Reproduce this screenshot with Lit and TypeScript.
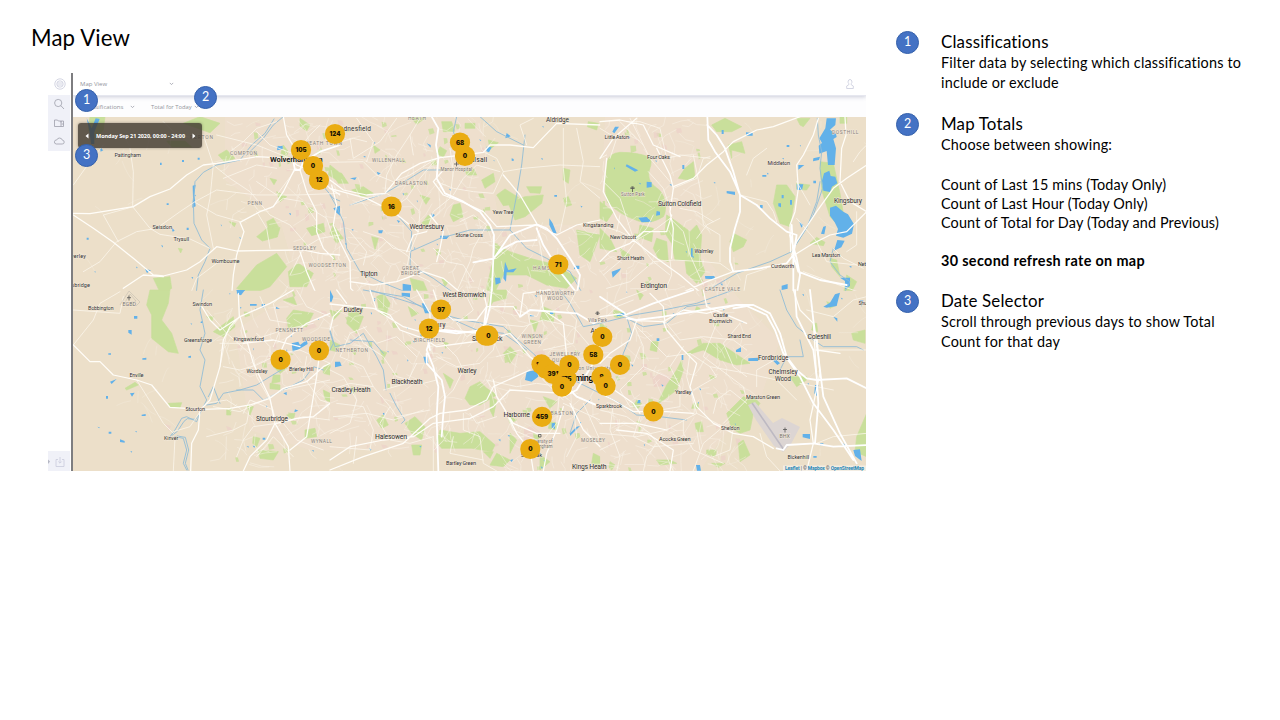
import { LitElement, html, svg, css } from "lit";
import { customElement } from "lit/decorators.js";

type Label = [string, number, number, number, string];
type Pin = [string, number, number];
interface Sheet { x: number; y: number; parks: string; water: string; streams: string; minor: string; major: string; trunk: string; }

// Every sheet is drawn on a grid of a third of a pixel.
const sheets: Sheet[] = [
  {
    x: 70, y: 115,
    parks: "M60 5h45l-5 40l-25 30l-20-30zM290 78l55 0l20 18l-60 0zM445 120l25-15l25 25l-30 12zM560 365l40-32l30 5l-8 28l-45 12zM500 520l60-70l60-35l30 40l-50 60l-60 25zM655 470l30-25l45 30l-20 40l-50 0zM250 490l50-5l5 35l-30 22zM710 340l50-15l5 25l-40 12zM340 25l50-20l60 20l-30 28zM590 320l20-10l15 25l-30 5zM780 150l25 20l-5 25l-25-15zM690 10l30 20l-10 18l-20-15zM620 230l30 15l-20 15zM478 320l20 5l-5 10zM325 400l12 2l-5 12zM640 90l15 20l-10 25l-15-10zM600 190l20 5l-8 14z",
    water: "M50 10l15 30l12-30l12 2l-16 40l0 35l-10 0l-5-40zM368 212l9-3l-4 30l4 35l-10 4l2-30zM620 95l18-3l0 10l-16 4zM302 333l12 14l-6 3zM225 462l18 4l-12 8zM790 280l20-8v30l-12-10zM500 525l25 0l-8 15h-18zM90 98l10 8l-8 4zM50 368h6v6h-6zM290 265h6v5h-6zM336 135h6v6h-6zM270 143h5v7h-5zM383 128h6v6h-6zM350 338h6v7h-6z",
    streams: "M612 12L585 55L545 90L510 135L440 150L400 172L375 200L370 260L372 325L395 375L420 400L405 440L385 480L378 540M640 5L610 30L580 70L530 120M740 190L790 250L810 258",
    minor: "M180 100L190 170L188 275L240 340L270 358L360 372L420 400M10 210L60 140L100 90M190 275L100 300L145 380M40 470L90 440L140 380L200 350L260 340L330 290L375 260L440 225L560 240L680 240L810 235M360 540L380 490L440 445L500 430M430 150L480 190L540 230L600 300L660 330L720 400M510 320L440 300L375 262M400 60L430 150L420 250L410 300L430 400M560 50L600 90L680 120M440 60L560 90L660 130M600 400L590 340L560 290M620 160L560 150L460 190M750 30L720 60L690 100M660 480L700 400L750 370L810 360M720 280L770 310L790 370M480 110L520 80L560 40L620 20M280 20L320 60L380 70M680 160L620 240L560 200M600 280L640 250L700 260L740 320",
    major: "M10 295L60 296L130 285L190 275L240 245L300 222L350 180L400 150L440 145L560 125L660 130L680 150L730 170L780 220L810 240M10 300L70 340L130 382L190 430L250 480L280 483L350 465L390 440L440 395L500 408L700 405L750 415L810 420M640 5L650 60L680 110M675 160L640 230L610 275L570 290L510 322L522 350L500 420L490 480L485 540M690 165L710 230L740 290L740 350L760 400L790 430M690 410L710 470L740 540M280 485L220 480L160 520",
    trunk: "M685 110L670 140L675 165L690 165L700 140L750 110L810 90",
  },
  {
    x: 330, y: 115,
    parks: "M335 20h30l10 30h-35zM240 5l45 5l-25 18zM405 25l30 0l0 15l-30 0zM500 240l25-18l40 25l-10 20l-35 5zM535 265l50-20l55-5l-5 25l-50 40l-30 10zM590 215l45 0l-5 20l-30-2zM500 390l40 20l60 20l80 20l60 40l-30 30l-60-10l-60-30l-70 0l-40 80l-20 0zM740 345l70 15l-30 80l-30-20zM0 165l35 10l20 30l-30 0zM65 225l35-10l30 20l-30 12zM370 270l20-5l10 40l-30 15l-10-20zM455 195l35-20l5 25l-30 20zM10 330l30 40l-20 15l-20-30zM240 490l40 10l15 35l-40 5zM700 160l20 5l-5 40l-15-10zM700 250l15-5l10 25l-18 5zM275 325l20-25l10 10l-15 25zM125 365l20 5l-10 35zM405 160l25 0l10 20l-30 0zM330 95l20 12l-10 20l-20-10zM130 90l20 15l-15 10zM335 490l20 10l-10 15zM270 240l30 10l-12 18zM475 75l30 8l-25 20zM775 20l30 5l-5 20l-28-10z",
    water: "M525 440l10 25l25-5l-10 12l-20 0l-2 28l-8-10zM495 488l15 0l2 15l-15 6zM658 310l10 15l12 30l-10 0l-12-25zM470 95l15 2l-8 15l-8-3zM330 362h28l-8 10h-18zM140 170l12 5l-8 5zM60 190l20-3l-5 8zM145 346h14l-3 9h-10zM218 506l25 4l0 25l-25 0zM732 452h16v10h-16zM530 54l12 10l-16 6zM200 315l10 3l-4 6zM305 295l10 5l-10 10zM290 85l12 5v8zM673 240h8v5h-8zM545 130l6 2v6l-6-1z",
    streams: "M0 240L20 275L40 320L50 400L90 470L150 500L250 540M210 310L245 350L240 450L310 490L380 540M585 60L575 150L560 240L540 345L590 400L650 430L720 470L760 540M240 410L330 370L420 345L540 345M340 165L280 165L240 190L165 235L60 270M450 5L500 50L580 90M380 5L370 50L390 100",
    minor: "M0 142L100 140L140 180L190 200L240 180L320 130M60 70L70 130L150 80L200 10M80 10L130 80L110 140M240 60L200 120L170 180L165 230M320 130L270 190L230 250L160 300M60 270L110 250L170 235L210 260L200 290M230 250L270 290L265 350L240 410L230 460M320 200L370 220L430 230L490 235L520 170L500 130L460 110M370 240L400 190L440 150L510 170M360 100L370 170L360 250L310 290L290 350M390 320L430 300L470 330L430 400L420 440L380 530M520 170L580 160L690 150L810 155M700 40L700 160L710 260L690 350M740 40L760 140L750 200L810 250M620 330L630 390L640 450L690 500M60 440L130 420L170 380L230 420L270 460M100 350L160 370L190 400L240 410M440 440L500 430L560 380L620 375M60 350L110 410L100 450M0 90L70 70L110 80M590 90L570 30L610 10M250 120L240 60L270 10M310 400L350 440L400 450L430 500M200 500L220 460L300 500",
    major: "M0 195L40 225L110 240L165 235L215 175L270 145L330 128L400 120L460 112L480 90L540 90L610 98L680 25L810 30M340 165L310 200L340 240L400 262L460 290L500 335L620 330L680 360L740 330L810 315M300 300L340 350L330 400L320 440M265 350L190 290L110 250L0 220M5 210L20 270L10 330L30 380L60 440L62 520L80 540M60 500L130 510L200 500L280 470L340 490L400 540M520 180L570 240L620 325M230 410L250 360L290 350",
    trunk: "M305 5L325 40L318 90L325 130L320 190L345 235L400 260L450 290L480 330L492 360L490 430L485 540M492 430L540 360L620 328L650 340L680 370L720 430L750 480L740 540M492 430L430 442M490 430L520 400L560 380L620 375M620 340L640 390L690 470L745 540",
  },
  {
    x: 600, y: 115,
    parks: "M18 180L22 140Q28 115 60 112Q110 112 145 125Q160 135 148 165Q140 195 165 215Q190 230 195 260Q200 290 190 305Q150 330 115 318Q60 300 22 262Q12 225 18 180zM235 190l20-30l25-20l5 50l-20 5zM200 300l30 20l40 30l20-20l15 30l-5 70l15 40l-25 35l-30-30l-5-40l-30 0l-10-50l-20-30zM170 370l30 10l5 60l-30-10l-15-30zM120 330l40 10l-5 40l-40-15zM335 30l40-20l50 25l-30 15l-45 0zM385 90l40-10l10 35l-40-10l0 25zM530 210l30 0l25 35l-15 90l-30-10l-20-60zM400 355l40 20l-10 20l-30 15l-10-30zM660 140l40 5l20 90l10 60l0 50l-40-40l-25-80zM630 385l20-18l25 15l-5 10zM690 430l20 5l10 50l-25-30zM590 10l40 0l-20 25l-10-5zM720 5h20v20h-20zM0 260l40 30l-20 30l-20-10zM0 340l30 30l20 40l-50-10zM590 205l40 5l-10 15l-30-2zM740 480l30 20l-20 40l-20 0zM60 400l30 20l-20 15z",
    water: "M680 10l28 0l-2 20l-16 14l18 12l2 10l-10 6l8 28l-4 50l-20 0l-4-42l-22 8l-2-24l10-8l-8-14l18-30zM672 175l16-8l4 16l14 2l6 20l-16 10l-6 16l-20-4l-4-30zM690 278l18-6l22 18l14 8l18 30l-6 28l-26 12l-22-6l6-20l-10-20l-14-20zM712 375l22 2l-10 20l-22 10zM115 308l25-2l15 14l-30 2zM140 200l15 2l0 14l-15 2zM80 148l35 18l-10 4l-28-16zM170 288l10 2v10l-12 2zM590 208h20l-4 17h-15zM595 150l18 0l-18 14zM640 130l20-5l-3 10l-18 4zM45 35l12 0l-14 20l-6-5zM35 470l28-10l-5 8l-20 20zM315 483h28l3 10l-30-2zM670 335l8-2l-5 25l-10-2zM598 320l12 10l-6 8zM545 512l18-5v14l-18 4zM720 488l30 0l0 25l-15 10l0-25zM438 52l20 2v8h-20zM380 228l25 2v10l-25-5zM535 265l8 0v12l-8-3zM570 255h6v14h-6zM545 240h6v10h-6zM480 270h8v10h-8zM487 180h12v5h-12zM273 400h5v25l-5 0zM247 150h6v12h-6zM560 90h8v6h-8zM640 197h8v8h-8zM365 45h6v12h-6zM780 530l20 5v10h-20z",
    streams: "M652 10L655 60L665 110L660 160L668 220L640 300L600 370L575 410L510 440L410 475L300 540M700 400L690 440L720 480L750 500L730 540M660 200L650 260L620 340L580 400",
    minor: "M0 130L20 120M60 20L90 50L130 90L150 130L210 200M80 20L120 20L180 40L200 130M200 130L240 120L330 130M130 90L90 10M145 170L190 220L210 280M220 220L290 190L310 130L330 125M280 120L300 220L310 330L360 360L360 440M210 310L250 350L270 420L310 510M160 300L140 340L110 375L160 440L210 480M10 200L60 250L100 370M0 330L60 350L110 375L170 340L210 310M110 375L70 430L10 480M20 520L90 500L160 440L220 435L310 440M360 310L320 330L290 370M420 240L500 260L520 290L530 320M590 310L650 380L680 440L770 450M610 470L690 500L800 540M430 540L440 480L500 460M500 100L460 130L440 180M590 200L630 270M760 140L780 110L800 90M770 290L770 390L740 410M0 40L50 70L30 130M240 280L290 290L340 320M50 350L60 300M210 435L215 480L190 540M310 440L360 445L395 470M700 400L730 430L790 460",
    major: "M655 10L640 60L610 120L590 150L595 220L585 290L570 330L572 410M735 5L738 60L725 100L720 200L750 260L800 290M800 150L740 190L700 220L650 290L590 380L575 420M800 290L740 350L690 360L640 385L575 425M220 215L280 190L320 150L370 110L400 80L470 45L520 35L600 5M215 300L200 350L130 350L90 385L30 410L0 440M100 375L170 430L240 480L310 540M170 100L210 180L220 220L210 290L220 340L215 430M0 20L60 15L130 30L160 90L240 125M20 130L10 230L50 310L100 375M0 130L40 70L110 10M400 470L320 500L230 540",
    trunk: "M322 5L325 75L345 110L390 170L410 215L420 240L420 290L405 340L390 400L390 440L400 470L480 460L560 445L580 420L590 360L560 350L510 310L470 270L420 240L400 170L375 100L350 60L322 30M575 330L580 420L580 540M570 360L590 430L600 480L590 540M580 420L595 470L660 495L740 510",
  },
  {
    x: 40, y: 290,
    parks: "M330 0h60l-5 40l-20 50l30 40l20 60l-30-5l-50-40l0-70l-15-30zM555 100l25-20l5 30l-35 30l-30-15zM385 340l40-2l-5 15l-30-2zM655 480l60 5l-15 25l-40-5zM760 60l60 10l-20 40l-55 5l-5-30zM730 30l30-10l10 25zM795 420l30-5l5 25l-35 5zM700 230l40 5l-20 15zM700 255l20 0l0 20l-25 5zM560 355h14l-2 20h-12zM620 345l20 5l-10 25zM255 295l30-18l10 8l-35 15zM850 230l20 0v25l-20-5zM690 280l30 5v14l-30-3zM640 440l20 5l-10 25l-12-10zM850 300l20 10v25l-15-5zM740 375l25-5l-5 20zM500 80l20 0l-5 15z",
    water: "M590 0h25l-12 16l-12-4zM755 160l20-5l5 10l20-15l3 12l-25 15l-20 8zM265 120l10 0v14l-10-6zM210 275l20-8l-15 15zM270 310l14-2l-8 12zM240 448l14 5v5l-14-2zM206 425h8v6h-8zM305 374l12-2v6h-12zM307 205l12-2v6h-12zM205 190h8v4h-8zM282 78h10v8h-10zM482 95l6-2v6h-6zM668 443h8v6h-8zM630 42h20v5h-20zM665 42h10v10h-10zM708 50l12 6h-12zM445 199l8-2v6h-8zM198 318h6v8h-6zM730 310l10-4v10zM765 358l10 4l-12 5z",
    streams: "M490 0L480 60L495 130L480 180L495 210L480 290L500 330L480 370L470 395L440 380L425 385L405 420L390 440M478 375L466 388L442 386L432 394L412 424L396 436M405 440L430 445L440 480L430 520L440 540M412 438L436 442L446 480L436 520L444 540M500 345L530 340L550 310L600 300L650 285L690 260L740 230L740 180M590 300L640 300L670 330L730 300L790 270L820 230L850 240M505 320L520 290L540 340",
    minor: "M100 60L240 70L250 20M100 165L160 90L180 40L240 5M290 270L340 350L370 400L400 430M405 445L400 543M480 365L450 410L400 425M520 350L600 365L640 345L730 300L870 270M540 160L610 160L730 120L820 100M600 80L560 130L640 200L650 260L690 330L710 400M550 230L600 240L650 225L720 190L780 180M500 340L560 330L600 355M630 345L620 400L580 420L500 440M710 400L640 410L610 450L590 500M720 400L790 380L870 390M730 400L770 450L850 480M650 130L690 170L690 200M800 200L790 260L840 330L870 340M700 170L720 120L700 40L740 0M770 0L800 50L870 80M500 60L560 130L540 230M780 180L870 220M650 500L700 440L760 500M610 370L630 330L700 360M660 20L690 90L750 100",
    major: "M100 165L150 215L180 215L220 255L290 270L335 285L390 352L490 358L570 355L630 345L690 325L730 295L800 275L850 230L870 220M595 10L598 80L570 110L550 150L540 230L510 330L480 360L475 420L455 460L452 543M480 40L510 90L540 120L600 80L640 220L690 325L705 400L745 470L750 543M705 400L680 450L630 500L610 543M600 80L690 40L760 0M610 160L700 150L780 170M870 70L800 100L740 145L720 190M840 180L830 260L810 380L800 440L750 480M710 400L770 385L820 380L870 340",
    trunk: "",
  },
  {
    x: 330, y: 290,
    parks: "M480 0h50l0 25l-40 10l-15 20zM330 420l60 10l60-5l45 40l-10 20l-60-10l-90 0l-15-20zM420 290l30-15l20 20l30 20l-50 30l-30 0l-15-20zM225 400l30-20l30 30l-10 40l-30-20zM340 250l30 20l-10 25zM140 20l20-10l20 30l-10 40l-20-10zM60 50l40 30l-20 50l-30-30zM235 50l30 20l-20 10zM245 465l30 0l-5 30l-20 0zM640 50l35 15l-5 30l-40-5zM600 90l25 5l-10 30zM520 190l20-20l20 20l-20 30zM480 320l20 10l-10 50l-10-20zM530 370l30 20l-20 10zM540 430l20 20l-20 40zM500 490l40 20l-20 20l-40-5zM640 320l40 15l-20 20zM660 395l25 5l-5 20l-25-5zM630 495l30 20l-30 25zM790 490l20 10v30l-25-10zM150 180l20 8l-10 20zM0 150l30 15l-10 20l-20-5zM0 60l30 10l-20 20zM140 390l20-15l15 30l-20 10zM460 485h30l-10 20zM610 430l20 10l-15 20zM340 155l15 5l-8 15zM60 180l20 0l-5 15zM65 290l20 10l-15 10z",
    water: "M590 245l30-5l5 20l-20 15l-20-5zM15 215l15 0l5 12l-20 5zM665 400l10-2v18l-10-3zM0 0l10 20l-5 15h-5zM215 8l25 2l0 12l-25-5zM275 40l10 0l15 30l-15 0zM280 200h12l3 20l-10 0zM660 65l10 2v5h-10zM600 75h12v4h-12zM740 410l10-2l-30 30v-8zM540 510l10-2l-5 8zM615 460l10-2v10h-10zM158 370l5-2l0 10z",
    streams: "M0 120L15 170L60 160L100 130L140 200L160 240L168 300M100 0L220 20L290 60L400 90L520 110L620 200L690 250L810 310M350 80L440 120L520 130L590 180M120 0L280 50M180 310L200 350L225 390L215 400M60 150L130 155L160 190M0 125L10 160L0 180M690 0L720 40L760 110L810 100M720 430L740 370L780 330",
    minor: "M0 300L60 280L130 290L180 350L200 380L300 360M0 240L40 260L80 330L60 400L0 430M80 120L100 160L160 200L200 260L280 280L320 270M20 340L100 350L130 420L120 480L0 470M130 290L100 230L30 200L60 130L110 110M180 350L150 400L180 450L240 460L310 440M320 200L380 230L450 220L490 180L500 130L450 100M300 170L340 160L380 200L400 240L370 300L330 340M500 200L570 180L610 210L640 270L700 330M400 370L400 420L450 440L460 520L500 543M310 440L310 543M370 440L360 490L460 510M470 270L560 290L620 280L690 290M470 270L520 350L550 420L620 450M560 150L600 100L590 50L530 0M400 0L430 60L380 100L410 140L480 100L580 110L640 90L730 110L790 180M740 0L710 60L740 90L730 160L640 180M640 60L680 120L720 160M690 290L680 400L640 450L600 500M700 340L810 390M730 350L740 440L710 500M500 380L440 400L420 370M760 340L810 450M780 200L810 160M10 380L110 370L190 390L280 360M80 440L70 520M260 200L200 140L140 160L100 110M260 220L230 280L160 300M700 0L650 20L620 80L560 60",
    major: "M0 42L130 55L180 75L210 120L280 145L320 170L470 150L540 130L600 200L680 260M0 540L100 500L220 460L300 385L330 370L410 360L470 330L490 290L600 240M20 0L50 40M40 50L10 80L0 120M0 510L60 470L160 450L250 440L310 400L420 385L490 350L540 300L700 310M460 0L470 50L440 90L370 90L330 60L310 0M470 50L550 50L570 80M570 80L580 10L660 0M690 290L710 200L700 100L640 60L630 0M700 350L680 420L650 490L640 543M720 340L760 420L810 470M530 370L560 430L600 480L610 543M490 270L500 320L550 400L620 430L690 430M260 0L300 70L300 150M120 0L140 60L220 110L290 130",
    trunk: "M470 50L460 120L380 130L310 120L290 180L310 230L325 290L320 380L325 543M290 190L290 220L335 270L345 320L340 370L335 440M300 180L290 130L340 120L460 130L480 50L485 0M680 260L740 320L810 350M570 80L600 60L740 70L790 100L810 90M700 320L740 300L790 220L810 160",
  },
  {
    x: 600, y: 290,
    parks: "M260 190l50-30l50 0l60 40l30 20l-40 5l-50-15l-50-30l-50 15zM155 155l20 0l-5 30l-20-5zM230 240l15-30l5 30l-20 60l-60 45l30-60zM380 370l50-50l40 10l10 10l-20 30l-10 50l-30 10l-25-15zM415 460l15-10l20 45l-30 20zM755 130l40-10v40l-35-10zM770 440l30-70v130l-35-15zM640 100h10l3 25l-18-5zM170 510l40 0l20 10l-50 5zM320 480l30 0l-5 20l-25-8zM110 0l20 15l-10 15zM570 260l50 0l0 10l-30 20zM110 330l15 10l-10 15l-15-5zM285 400l20-5l5 30l-20 0zM290 50l10 5v10l-15-3zM280 340l15 0v15l-20 0zM30 515l15 10l-10 15l-8-8zM0 100l20 10l-20 20zM335 520l40 0l-20 12zM680 35l30 10l-20 10zM40 60l40 10l-20 15l-18-5z",
    water: "M50 72l25-4l0 8l-25 3zM408 180l15-8v14l-15 0zM445 205l30-2v10h-30zM670 50l20-12l15-25l15-5l-10 40l-30 5zM608 432l22 0v15l-22-5zM645 285l10 0l-2 35l-10-10zM760 480l20-2l5 35l-20-15zM288 525l12 0l3 17h-12zM700 80l12 5v10zM115 330h6v10h-10zM520 200l20 20l-8 5l-15-15zM780 30l10 0l-5 20zM730 460l10 10l-15-4zM660 460h10v6h-10zM640 498h10v5h-10zM170 145h8v8h-8zM245 195h5v15h-5z",
    streams: "M0 100L100 75L190 60L290 40L400 0M80 80L95 130L70 190L60 230M540 0L560 60L590 110L640 150L670 170L770 170L790 180M540 240L560 200L610 200L600 150M0 310L60 340L110 375L180 380L260 390M90 90L130 110L200 100L260 50L330 40",
    minor: "M100 30L50 50L0 100M100 100L130 170L130 230L200 260L240 290M110 110L200 200L270 190L330 230L350 260L280 300M130 230L60 300L90 350L170 340M270 190L260 260L290 370L370 410L310 460L280 543M200 100L240 150L310 140L400 150L440 180M320 40L350 100L330 150L310 200L430 290L440 330L370 400M420 100L370 160L400 230L440 260M330 230L440 250L530 270L590 330M250 170L210 230L240 290L240 350L180 360M40 340L30 420L60 500L50 543M0 360L80 380L150 430L200 500L220 543M120 380L100 440L160 470L280 460M250 390L250 430L280 480L370 520M170 460L140 500L130 543M440 340L390 300L350 330L340 370M400 410L390 480L340 500M480 430L500 500L540 543M540 200L470 240L470 290M600 280L700 300M640 180L800 180M650 460L700 440L800 430M0 60L60 30L140 0M0 430L110 440L200 420L290 370M20 200L100 220L120 170M60 450L0 480M300 480L290 420M620 60L700 80L760 30L800 20",
    major: "M0 80L60 72L110 92L190 95L200 120L250 180L290 220L270 290L290 350L340 400L400 430L460 440L520 475M150 10L190 50L195 100M310 0L320 50L440 100M110 92L90 150L30 190L0 220M190 95L250 60L320 70L410 45M0 310L40 330L100 365L200 365L280 370M200 420L110 400L0 400M50 420L140 430L220 480L210 543M580 0L600 60L640 100L650 260M650 180L720 190M0 270L100 340L120 370M650 130L660 250L630 390L640 460L620 543",
    trunk: "M75 70L0 20M75 75L160 40L280 0M80 85L110 90L190 80L310 60L410 45L460 45L510 70L540 130L560 200L590 240L620 265L650 270L740 265L800 295M400 55L440 48L500 75L525 120L550 190L600 260L640 340L700 420L760 510M585 0L590 80L640 180L650 260L655 340L645 460L560 465L550 480L530 475M640 460L700 470L800 465M630 0L640 90L655 200L670 320L720 430L770 520",
  },
];

const labels: Label[] = [
  ["Wolverhampton", 270, 322.5, 161.8, "city"], ["Birmingham", 564.5, 610, 381.2, "bham"],
  ["Wednesfield", 334, 371, 131, "town small"], ["Walsall", 464.3, 487.3, 161.7, "town"],
  ["Aldridge", 546, 569, 122.3, "town small"], ["Pattingham", 114.5, 141, 156.8, "place"],
  ["PERTON", 190, 213, 139.2, "area"], ["COMPTON", 230, 257, 155, "area"], ["HEATH TOWN", 305, 342, 145, "area"],
  ["HEATH", 408, 426, 120, "area"], ["WILLENHALL", 372, 405, 161.6, "area"], ["DARLASTON", 395, 427, 185, "area"],
  ["PENN", 247.5, 262, 205.3, "area"], ["Seisdon", 152.5, 172, 228.7, "place"], ["Trysull", 173.5, 189, 241.4, "place"],
  ["Wombourne", 211.5, 239.5, 262.7, "place"], ["verley", 71, 86, 257.5, "place"], ["obridge", 71, 90, 287, "place"],
  ["SEDGLEY", 293, 316, 249.5, "area"], ["WOODSETTON", 308.5, 346, 266.8, "area"], ["Tipton", 360, 377.5, 275.6, "town"],
  ["Wednesbury", 409.5, 444, 228.6, "town"], ["Stone Cross", 455.5, 483, 237, "place"], ["Yew Tree", 492.5, 513.5, 214.4, "place"],
  ["GREAT", 402, 419, 269.6, "area"], ["BRIDGE", 401, 420, 275.2, "area"], ["HAMSTEAD", 533, 566, 269.6, "area"],
  ["HANDSWORTH", 536, 574, 294.7, "area"], ["WOOD", 547, 563, 300, "area"], ["Kingstanding", 583, 613.5, 226.5, "place"],
  ["Little Aston", 604.5, 629, 138.8, "place"], ["Four Oaks", 647, 670, 158.8, "place"], ["Sutton Park", 621, 644.5, 196, "poi"],
  ["Sutton Coldfield", 658, 701.5, 205.6, "town"], ["Middleton", 767.5, 790, 164.7, "place"], ["DOSTHILL", 832, 858.5, 133.8, "area"],
  ["Kingsbury", 834, 862, 203.4, "town"], ["New Oscott", 610, 636, 239.2, "place"], ["Short Heath", 617, 644, 260, "place"],
  ["Walmley", 694.5, 713.5, 252.7, "place"], ["Erdington", 640.5, 667, 287.6, "town"], ["CASTLE VALE", 704.5, 740, 291.2, "area"],
  ["Curdworth", 771, 794, 268.2, "place"], ["Lea Marston", 812, 840, 257.2, "place"], ["Net", 858, 866, 266, "place"],
  ["Bobbington", 88, 113.5, 310.3, "place"], ["EGBD", 122.5, 136, 306.3, "poi wide"], ["Swindon", 192.5, 212, 306, "place"],
  ["Greensforge", 184, 212, 341.6, "place"], ["Kingswinford", 233.5, 264, 341.2, "place"], ["PENSNETT", 275.5, 303, 332.4, "area"],
  ["WOODSIDE", 302, 330, 341, "area"], ["Wordsley", 246.5, 267.5, 372.8, "place"], ["Brierley Hill", 289, 313.5, 370.8, "place"],
  ["Enville", 129.5, 143.5, 376.8, "place"], ["Stourton", 185.5, 205, 411, "place"], ["Kinver", 164, 178.5, 440.3, "place"],
  ["Stourbridge", 256, 288, 421.2, "town"], ["WYNALL", 311, 332, 442.5, "area"], ["Dudley", 343.5, 362.5, 311.6, "town"],
  ["NETHERTON", 335.5, 368, 352, "area"], ["West Bromwich", 442.5, 486, 297, "town"], ["Oldbury", 421, 445.5, 326.9, "town"],
  ["BIRCHFIELD", 414, 445, 342, "area"], ["Smethwick", 472, 502.5, 341.3, "town"], ["WINSON", 521.5, 542.5, 338.2, "area"],
  ["GREEN", 523.5, 541, 343.8, "area"], ["JEWELLERY", 549.5, 580, 356.3, "area"], ["QUARTER", 552, 577, 362, "area"],
  ["Villa Park", 588, 607, 322, "poi"], ["Aston", 590.5, 606, 333.2, "town small"], ["Aston University", 570, 611, 369.5, "poi"],
  ["Warley", 457.5, 476.5, 373.3, "town"], ["Blackheath", 391.5, 422.5, 384.4, "town"], ["Cradley Heath", 331.5, 370.5, 391.8, "town"],
  ["Halesowen", 375, 407, 438.6, "town"], ["Harborne", 503.5, 530, 417.4, "town"], ["EDGBASTON", 539, 573, 415.3, "area"],
  ["University of", 529, 552.5, 443, "poi"], ["Birmingham", 529, 552.5, 448, "poi"], ["Selly Oak", 521, 542, 456.6, "place"],
  ["Bartley Green", 446, 476, 465, "place"], ["Kings Heath", 572, 606.5, 469, "town"], ["MOSELEY", 581, 605, 442, "area"],
  ["Sparkbrook", 596, 622, 408, "place"], ["Yardley", 675, 691.5, 393.6, "place"], ["Acocks Green", 659, 690.5, 440.8, "place"],
  ["Castle", 713, 728, 317.2, "place"], ["Bromwich", 709, 732, 323.2, "place"], ["Shard End", 727.5, 751, 337.8, "place"],
  ["Fordbridge", 758, 788.5, 360, "town small"], ["Chelmsley", 768.5, 797.5, 373.5, "town small"], ["Wood", 775, 791, 381, "town small"],
  ["Coleshill", 807.5, 831, 339, "town"], ["Shu", 858.5, 867, 305, "place"], ["Marston Green", 746, 780, 399, "place"],
  ["Sheldon", 721, 739.5, 429.6, "place"], ["BHX", 779.5, 790, 438, "poi wide"], ["Bickenhill", 787.5, 809, 458.8, "place"],
  ["Manor Hospital", 440.5, 472, 171.3, "poi"],
];

const pins: Pin[] = [
  ["124", 335, 134], ["105", 301, 150], ["0", 313, 166], ["12", 319, 180], ["68", 460, 142.5], ["0", 465, 156],
  ["16", 391.5, 206.5], ["71", 558.3, 264.5], ["97", 441, 309.5], ["12", 429, 328.5], ["", 485.7, 335.7], ["0", 488.3, 335.7],
  ["0", 319, 350.5], ["0", 280.6, 359.7], ["124", 541.5, 364.3], ["", 546.5, 369], ["391", 553, 373.8], ["175", 566.5, 378.5],
  ["0", 569.4, 365], ["0", 562, 386.7], ["0", 602.3, 336.8], ["58", 593.3, 354.7], ["0", 620, 364.9], ["9", 601.5, 376.6],
  ["0", 605.6, 385.8], ["459", 542, 416.8], ["0", 530.3, 449], ["0", 653.4, 411.3],
];

function sequence(seed: number) {
  let s = seed;
  return () => ((s = (s * 16807) % 2147483647) / 2147483647);
}

// Residential lanes and garden squares of the built-up area.
function lanes() {
  const r = sequence(91);
  let lane = "", rural = "", green = "", blush = "", ponds = "";
  const urban = (x: number, y: number) =>
    (x > 225 && x < 740 && !(x > 485 && x < 600 && y < 225) && !(x < 285 && y > 215 && y < 300) && !(x < 500 && x > 300 && y > 452)) &&
    !(x > 604 && x < 664 && y > 150 && y < 223) && !(x > 700 && y < 255);
  for (let i = 0; i < 900; i++) {
    const x = 225 + r() * 530, y = 118 + r() * 352, a = r() * 6.28, l = 4 + r() * 10;
    if (!urban(x, y)) continue;
    const bx = x + Math.cos(a) * l, by = y + Math.sin(a) * l;
    const c = a + (r() - 0.5) * 1.8;
    lane += `M${x.toFixed(1)} ${y.toFixed(1)}L${bx.toFixed(1)} ${by.toFixed(1)}L${(bx + Math.cos(c) * l).toFixed(1)} ${(by + Math.sin(c) * l).toFixed(1)}`;
  }
  for (let i = 0; i < 330; i++) {
    const x = 225 + r() * 520, y = 118 + r() * 350, w = 1.5 + r() * 4, h = 1.5 + r() * 4, k = r();
    if (!urban(x, y)) continue;
    const p = `M${x.toFixed(1)} ${y.toFixed(1)}l${w.toFixed(1)} ${(r() * 2 - 1).toFixed(1)}l${(r() * 2).toFixed(1)} ${h.toFixed(1)}l${(-w).toFixed(1)} ${(r() * 2).toFixed(1)}z`;
    if (k < 0.58) green += p; else blush += p;
  }
  for (let i = 0; i < 90; i++) {
    const x = 75 + r() * 790, y = 118 + r() * 350;
    ponds += `M${x.toFixed(1)} ${y.toFixed(1)}l${(1 + r() * 1.5).toFixed(1)} .4l-.5 ${(1 + r()).toFixed(1)}z`;
  }
  for (let i = 0; i < 130; i++) {
    const x = 75 + r() * 790, y = 118 + r() * 350, dx = (r() - 0.5) * 40, dy = (r() - 0.5) * 40;
    rural += `M${x.toFixed(1)} ${y.toFixed(1)}q${(dx / 2).toFixed(1)} ${(dy * 0.8).toFixed(1)} ${dx.toFixed(1)} ${dy.toFixed(1)}`;
  }
  return { lane, rural, green, blush, ponds };
}
const fine = lanes();

@customElement("city-map")
class CityMap extends LitElement {
  static styles = css`
    :host { display: block; height: 354px; }
    svg { display: block; width: 100%; height: 100%; }
    .land { fill: #ecdfc9; }
    .urban { fill: #f0dfd0; opacity: .6; }
    .park { fill: #c9df9b; }
    .round { stroke: #c9df9b; stroke-width: 2; stroke-linejoin: round; }
    .soft { opacity: .85; }
    .blush { fill: #ecd2c8; opacity: .75; }
    .water { fill: #62b1e9; }
    .line { fill: none; stroke-linejoin: round; stroke-linecap: round; }
    .stream { stroke: #8fbcd6; stroke-width: 2.6; }
    .minor { stroke: #fbf6ec; stroke-width: 2.8; opacity: .85; }
    .major { stroke: #fffdf8; stroke-width: 3.8; }
    .trunk { stroke: #fff; stroke-width: 5.4; }
    .lane { stroke: #f9f2e8; stroke-width: .6; opacity: .8; }
    .rural { stroke: #f3eadb; stroke-width: .6; opacity: .8; }
    .apron { fill: #dcd5d3; }
    .runway { stroke: #bdb9c2; stroke-width: 1.6; fill: none; }
    .mark { stroke: #555; stroke-width: .8; fill: none; }
    .outline { stroke: #c5bdb0; stroke-width: .6; fill: none; }
    text { font-family: Roboto, sans-serif; fill: #2f2f31; }
    .halo { paint-order: stroke; stroke: #f3e9da; stroke-width: .8px; }
    .city { font-size: 7.8px; font-weight: 700; fill: #222; }
    .bham { font-size: 9.4px; font-weight: 700; fill: #111; }
    .town { font-size: 6.9px; }
    .small { font-size: 6.5px; }
    .place { font-size: 5.6px; }
    .area { font-size: 4.9px; fill: #85807b; }
    .poi { font-size: 4.6px; fill: #77736f; }
    .wide { font-size: 5.4px; }
    .pin { fill: #eaac12; }
    .count { font: 900 6.1px Inter, sans-serif; fill: #1b1405; text-anchor: middle; }
    .credit { fill: #f5f0e8; opacity: .85; }
    .credits { font-size: 4.9px; font-weight: 700; fill: #2585b5; }
    .dark { fill: #444; font-weight: 400; }
  `;
  render() {
    const layer = (key: "parks" | "water" | "streams" | "minor" | "major" | "trunk", cls: string) =>
      sheets.map((s, i) => svg`<g transform="translate(${s.x} ${s.y}) scale(.33333)" clip-path="url(#sheet${i})"><path class=${cls} d=${s[key]}/></g>`);
    return html`<svg viewBox="73 117 793 354" preserveAspectRatio="none">
      <defs>
        ${sheets.map((s, i) => svg`<clipPath id="sheet${i}"><rect x="-5" y="-5" width=${i === 3 ? 875 : 816} height=${s.y === 115 ? 532 : 560}/></clipPath>`)}
      </defs>
      <rect class="land" x="73" y="117" width="793" height="354"/>
      <path class="urban" d="M225 117H480L500 225L600 225L605 117H700V250L740 300L780 340L760 400L720 440L700 471H500L480 450H310L250 430L235 330L300 290L280 220L225 180z"/>
      <path class="blush" d="M652 377l10-4l10 4l-4 9l-14 1zM524 429l8-3l8 6l-2 10l-14 0zM534 352l10-2l2 8l-12 2zM303 325l10-3l4 5l-14 4zM165 424l6 2l-2 5z"/>
      <path class="park soft" d=${fine.green}/><path class="blush" d=${fine.blush}/>
      ${layer("parks", "park round")}
      <path class="line rural" d=${fine.rural}/><path class="line lane" d=${fine.lane}/>
      <path class="water" d=${fine.ponds}/>
      ${layer("water", "water")}${layer("streams", "line stream")}${layer("minor", "line minor")}
      ${layer("major", "line major")}
      <path class="apron" d="M748 405l7-3l18 21l9-5l18 9l-9 17l-8 8l-9-6l-18-26z"/>
      <path class="runway" d="M752 403L784 450"/>
      ${layer("trunk", "line trunk")}
      <path class="outline" d="M120 305L129 291L140 302L136 306M124 304L130 294L136 301z"/>
      <path class="mark" d="M129 295.500v5M127 297.700h4M785 427.500v5M783 429.500h4M456.500 161.500v5M454 164h5M632.500 187v5M597.500 312v3M538.500 434.500h2.500v2.500h-2.500z"/>
      <path class="mark" fill="#666" d="M630.700 188.500a1.800 1.800 0 1 1 3.600 0zM596 314a1.600 1.600 0 1 1 3 0z"/>
      ${labels.map(([t, a, b, y, c]) => svg`<text class="halo ${c}" x=${a} y=${y} textLength=${b - a}>${t}</text>`)}
      ${pins.map(([t, x, y]) => svg`<circle class="pin" cx=${x} cy=${y} r="10.100"/><text class="count" x=${x} y=${y + 2.2}>${t}</text>`)}
      <rect class="credit" x="783" y="465.500" width="83" height="5.500"/>
      <text class="credits" x="785" y="470" textLength="79">Leaflet <tspan class="dark">| ©</tspan> Mapbox <tspan class="dark">©</tspan> OpenStreetMap</text>
    </svg>`;
  }
}

@customElement("app-root")
class AppRoot extends LitElement {
  static styles = css`
    :host { display: block; width: 1280px; height: 720px; overflow: hidden; background: #fff; color: #000; font-family: Lato, sans-serif; }
    .slide { display: flex; height: 100%; }
    .left { box-sizing: border-box; width: 866px; padding: 22px 0 0 48px; flex: none; }
    h1 { margin: 0 0 19px -17px; font-weight: 400; font-size: 22.200px; line-height: 32px; letter-spacing: .14px; white-space: nowrap; }
    .shot { position: relative; display: flex; width: 818px; height: 398px; }
    .rail { width: 23px; flex: none; display: flex; flex-direction: column; justify-content: space-between; border-right: 2px solid #7d7d80; box-sizing: content-box; }
    .tools { display: flex; flex-direction: column; height: 78px; }
    .logo { height: 22px; display: grid; place-items: center; }
    .set { flex: 1; background: #f0f1f8; display: flex; flex-direction: column; align-items: center; padding-top: 3px; width: 22px; gap: 6.500px; box-sizing: border-box; }
    .foot { height: 20px; width: 22px; background: #f0f1f8; display: flex; align-items: center; gap: 2px; }
    .foot svg { margin-top: 2px; }
    svg { display: block; flex: none; }
    .ico { fill: none; stroke: #9ea0ab; stroke-width: .8; }
    .faint { fill: none; stroke: #c9cbdc; stroke-width: .8; }
    .main { flex: 1; min-width: 0; display: flex; flex-direction: column; font-family: "Open Sans", sans-serif; color: #92949b; font-size: 6px; }
    .top { height: 23px; display: flex; align-items: center; padding: 0 11px 0 7px; box-shadow: 0 1px 4px rgba(60,65,110,.25); border-bottom: 1px solid #e6e7ef; box-sizing: border-box; position: relative; clip-path: inset(0 0 -7px 0); }
    .view { width: 89px; }
    .push { margin-left: auto; }
    .filters { height: 21px; display: flex; align-items: center; padding: 1px 0 0 11px; box-sizing: border-box; background: #fdfdfe; }
    .cls { width: 46px; }
    .tot { margin-left: 16px; width: 43px; white-space: nowrap; font-size: 5.800px; }
    .date { position: absolute; left: 30px; top: 50px; width: 124px; height: 25px; box-sizing: border-box; border-radius: 3px; background: rgba(62,55,46,.8); color: #fff; display: flex; align-items: center; justify-content: space-between; padding: 0 6px 0 7px; font: 700 5.500px "Open Sans", sans-serif; letter-spacing: -.06px; box-shadow: 0 0 3px rgba(0,0,0,.35); white-space: nowrap; }
    .arrow { fill: #fff; }
    .ball { width: 23px; height: 23px; box-sizing: border-box; border-radius: 50%; background: #4472c4; border: 1px solid #3561ab; color: #fff; font-size: 12.500px; line-height: 20.500px; text-align: center; flex: none; }
    .on { position: absolute; }
    .one { left: 27px; top: 16px; } .two { left: 146px; top: 13px; } .three { left: 27px; top: 71px; }
    .notes { box-sizing: border-box; margin-left: 30px; flex: 1; padding-top: 31px; }
    .note { display: flex; gap: 22px; }
    h2 { margin: 0; font-weight: 400; font-size: 16.900px; line-height: 22px; letter-spacing: .17px; }
    p { margin: 0; font-size: 14.400px; line-height: 20px; letter-spacing: .2px; white-space: nowrap; }
    .list { line-height: 19px; margin: 20px 0 19px; letter-spacing: .14px; }
    .bold { font-weight: 700; margin-bottom: 19px; letter-spacing: .34px; }
    .gap { margin-bottom: 20px; }
  `;
  render() {
    const chevron = html`<svg width="5" height="4" viewBox="0 0 5 4"><path class="ico" d="M.8 .9L2.500 2.600L4.200 .9"/></svg>`;
    return html`<div class="slide">
      <div class="left">
        <h1>Map View</h1>
        <div class="shot">
          <div class="rail">
            <div class="tools">
              <div class="logo"><svg width="12" height="12" viewBox="0 0 12 12"><circle class="faint" cx="6" cy="6" r="5.200"/><circle class="faint" cx="6" cy="6" r="3.200"/><path class="faint" d="M3.500 5h5M3.500 7h5"/></svg></div>
              <div class="set">
                <svg width="12" height="12" viewBox="0 0 12 12"><circle class="ico" cx="5.200" cy="5" r="3.600"/><path class="ico" d="M7.800 7.600L11 11"/></svg>
                <svg width="12" height="12" viewBox="0 0 12 12"><path class="ico" d="M1.500 9.500V3h3l.8 1H8v5.500zM8 5.500V4h2.500v5.500H8M8.500 7h2"/></svg>
                <svg width="12" height="12" viewBox="0 0 12 12"><path class="ico" d="M3.200 9h6a1.900 1.900 0 0 0 .2-3.800a3 3 0 0 0-5.700-.2a2 2 0 0 0-.5 4z"/></svg>
              </div>
            </div>
            <div class="foot">
              <svg width="3" height="8" viewBox="0 0 3 8"><path fill="#b5b7c4" d="M0 1.500L2 3.500L0 6z"/></svg>
              <svg width="14" height="12" viewBox="0 0 14 12"><path class="faint" d="M5 3.500H3v7h8v-7H9M7 1v6M5.300 5.500L7 7.200L8.700 5.500"/></svg>
            </div>
          </div>
          <div class="main">
            <div class="top"><span class="view">Map View</span>${chevron}
              <svg class="push" width="10" height="12" viewBox="0 0 10 12"><path class="faint" d="M5 1.500a2 2.300 0 0 1 1.300 4L6 6.500l2.300 1.500v2.500H1.700V8L4 6.500l-.3-1A2 2.300 0 0 1 5 1.500z"/></svg></div>
            <div class="filters"><span class="cls">Classifications</span>${chevron}<span class="tot">Total for Today</span>${chevron}</div>
            <city-map></city-map>
          </div>
          <div class="date"><svg width="4" height="6" viewBox="0 0 4 6"><path class="arrow" d="M3.500 .5v5L.5 3z"/></svg><span>Monday Sep 21 2020, 00:00 - 24:00</span><svg width="4" height="6" viewBox="0 0 4 6"><path class="arrow" d="M.5 .5v5L3.500 3z"/></svg></div>
          <div class="ball on one">1</div><div class="ball on two">2</div><div class="ball on three">3</div>
        </div>
      </div>
      <div class="notes">
        <div class="note gap"><div class="ball">1</div><div><h2>Classifications</h2><p>Filter data by selecting which classifications to<br>include or exclude</p></div></div>
        <div class="note"><div class="ball">2</div><div><h2>Map Totals</h2><p>Choose between showing:</p>
          <p class="list">Count of Last 15 mins (Today Only)<br>Count of Last Hour (Today Only)<br>Count of Total for Day (Today and Previous)</p>
          <p class="bold">30 second refresh rate on map</p></div></div>
        <div class="note"><div class="ball">3</div><div><h2>Date Selector</h2><p>Scroll through previous days to show Total<br>Count for that day</p></div></div>
      </div>
    </div>`;
  }
}
